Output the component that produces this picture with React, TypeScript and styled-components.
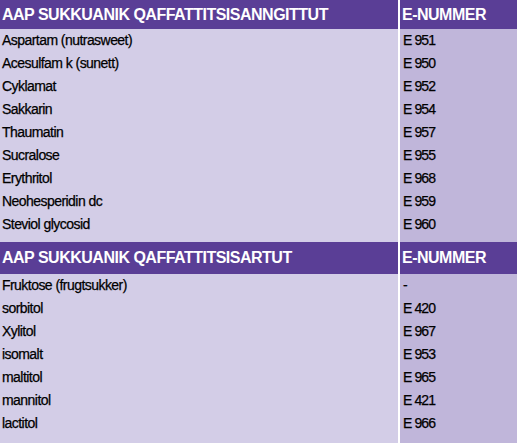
import React from "react";
import styled, { createGlobalStyle } from "styled-components";

const GlobalStyle = createGlobalStyle`
    html, body {
        margin: 0;
        padding: 0;
        background: #ffffff;
        overflow: hidden;
    }
    body {
        font-family: "Liberation Sans", Arial, sans-serif;
    }
`;

const TableWrapper = styled.div`
    width: 517px;
    height: 443px;
    overflow: hidden;
`;

const Grid = styled.div`
    display: grid;
    grid-template-columns: 398px 1fr;
    column-gap: 2px;
    margin-top: -3px;
`;

const HeadCell = styled.div<{ $first?: boolean }>`
    height: 32px;
    line-height: ${p => (p.$first ? "35px" : "32px")};
    padding-left: 2px;
    background-color: #5a3e96;
    color: #ffffff;
    font-size: 16px;
    font-weight: 700;
    letter-spacing: -0.5px;
    white-space: nowrap;
`;

const Cell = styled.div<{ $code?: boolean }>`
    height: 23px;
    line-height: 22px;
    padding-left: ${p => (p.$code ? "3px" : "2px")};
    background-color: ${p => (p.$code ? "#c0b6da" : "#d3cde7")};
    color: #000000;
    font-size: 14px;
    letter-spacing: ${p => (p.$code ? "-0.9px" : "-0.55px")};
    -webkit-text-stroke: 0.25px #000000;
    white-space: nowrap;
`;

const Spacer = styled.div<{ $height: number; $code?: boolean }>`
    height: ${p => p.$height}px;
    background-color: ${p => (p.$code ? "#c0b6da" : "#d3cde7")};
`;

type Row = [string, string];

const sections: { title: string; rows: Row[]; gap: number }[] = [
    {
        title: "AAP SUKKUANIK QAFFATTITSISANNGITTUT",
        gap: 6,
        rows: [
            ["Aspartam (nutrasweet)", "E 951"],
            ["Acesulfam k (sunett)", "E 950"],
            ["Cyklamat", "E 952"],
            ["Sakkarin", "E 954"],
            ["Thaumatin", "E 957"],
            ["Sucralose", "E 955"],
            ["Erythritol", "E 968"],
            ["Neohesperidin dc", "E 959"],
            ["Steviol glycosid", "E 960"],
        ],
    },
    {
        title: "AAP SUKKUANIK QAFFATTITSISARTUT",
        gap: 12,
        rows: [
            ["Fruktose (frugtsukker)", "-"],
            ["sorbitol", "E 420"],
            ["Xylitol", "E 967"],
            ["isomalt", "E 953"],
            ["maltitol", "E 965"],
            ["mannitol", "E 421"],
            ["lactitol", "E 966"],
        ],
    },
];

export default function App() {
    return (
        <TableWrapper>
            <GlobalStyle />
            <Grid>
                {sections.map((section, i) => (
                    <React.Fragment key={section.title}>
                        <HeadCell $first={i === 0}>{section.title}</HeadCell>
                        <HeadCell $first={i === 0}>E-NUMMER</HeadCell>
                        {section.rows.map(([name, code]) => (
                            <React.Fragment key={name}>
                                <Cell>{name}</Cell>
                                <Cell $code>{code}</Cell>
                            </React.Fragment>
                        ))}
                        <Spacer $height={section.gap} />
                        <Spacer $height={section.gap} $code />
                    </React.Fragment>
                ))}
            </Grid>
        </TableWrapper>
    );
}
